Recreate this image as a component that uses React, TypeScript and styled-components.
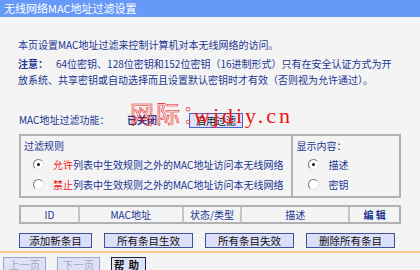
import React from 'react';
import styled, { createGlobalStyle } from 'styled-components';

const GlobalStyle = createGlobalStyle`
  html, body {
    margin: 0;
    padding: 0;
    background: #f4f4f4;
  }
  body {
    font-family: "Noto Sans CJK SC", "Liberation Sans", sans-serif;
    font-size: 10px;
    color: #1a3592;
  }
`

const Page = styled.div`
  position: relative;
  width: 420px;
  height: 270px;
  overflow: hidden;
  background: #f4f4f4;
`

const TitleBar = styled.div`
  height: 17px;
  line-height: 17px;
  background: #6699f8;
  color: #ffffff;
  font-size: 11px;
  padding-left: 4px;
  white-space: nowrap;
`

const Content = styled.div`
  padding: 0 19px 0 19px;
`

const Intro = styled.p`
  margin: 20px 0 0 -1px;
  line-height: 16px;
  white-space: nowrap;
`

const Note = styled.p`
  margin: 3px 0 0 -1px;
  line-height: 16px;
  white-space: nowrap;
`

const Strong = styled.b`
  font-weight: bold;
  margin-right: 8px;
`

const FilterRow = styled.div`
  display: flex;
  align-items: center;
  height: 16px;
  margin-top: 23px;
`

const FilterLabel = styled.span`
  width: 108px;
  white-space: nowrap;
`

const FilterState = styled.b`
  width: 62px;
  font-weight: bold;
`

const SmallButton = styled.button`
  height: 15px;
  padding: 0 6px;
  margin: 2px 0 0 0;
  background: #dfe2f7;
  border: 1px solid #4b63cc;
  color: #111;
  font-family: inherit;
  font-size: 10px;
  line-height: 13px;
`

const Box = styled.div`
  display: flex;
  margin-top: 7px;
  height: 60px;
  border: 2px solid #b2b2b2;
`

const BoxSection = styled.div<{ $width: number; $divider?: boolean }>`
  width: ${(p) => p.$width}px;
  padding: 2px 0 0 3px;
  ${(p) => p.$divider && 'border-left: 2px solid #b2b2b2;'}
`

const SectionTitle = styled.div`
  line-height: 16px;
`

const RadioRow = styled.div<{ $indent: number }>`
  display: flex;
  align-items: center;
  height: 20px;
  padding-left: ${(p) => p.$indent}px;
  white-space: nowrap;
`

const RadioDot = styled.span<{ $checked?: boolean }>`
  position: relative;
  width: 9px;
  height: 9px;
  border-radius: 50%;
  background: #fff;
  border: 1px solid;
  border-color: #7a7a7a #e6e6e6 #e6e6e6 #7a7a7a;
  margin-right: 9px;
  flex: none;
  &::after {
    content: '';
    display: ${(p) => (p.$checked ? 'block' : 'none')};
    position: absolute;
    left: 3px;
    top: 3px;
    width: 3px;
    height: 3px;
    border-radius: 50%;
    background: #111;
  }
`

const Red = styled.span`
  color: #ee1111;
`

const Table = styled.div`
  display: flex;
  margin-top: 7px;
  height: 15px;
  border: 2px solid #b2b2b2;
`

const HeadCell = styled.div<{ $width: number; $bold?: boolean }>`
  width: ${(p) => p.$width}px;
  text-align: center;
  line-height: 15px;
  font-weight: ${(p) => (p.$bold ? 'bold' : 'normal')};
  border-left: 2px solid #c6c6c6;
  &:first-child {
    border-left: none;
  }
`

const ActionRow = styled.div`
  display: flex;
  gap: 12px;
  margin-top: 9px;
`

const ActionButton = styled.button<{ $width: number }>`
  width: ${(p) => p.$width}px;
  height: 15px;
  padding: 0;
  background: #dcdff8;
  border: 1px solid #3f4f9e;
  color: #111;
  font-family: inherit;
  font-size: 10.5px;
  line-height: 13px;
`

const Divider = styled.div`
  height: 2px;
  margin-top: 3px;
  background: #fbcb8e;
`

const NavRow = styled.div`
  display: flex;
  gap: 11px;
  padding: 4px 0 0 3px;
`

const NavButton = styled.button<{ $disabled?: boolean; $width: number }>`
  width: ${(p) => p.$width}px;
  height: 15px;
  padding: 0;
  background: #dfe2f6;
  border: 1px solid ${(p) => (p.$disabled ? '#9aa3d6' : '#1f2540')};
  color: ${(p) => (p.$disabled ? '#a3a8c0' : '#111')};
  font-family: inherit;
  font-size: 10.5px;
  font-weight: ${(p) => (p.$disabled ? 'normal' : 'bold')};
  letter-spacing: ${(p) => (p.$disabled ? '0' : '4px')};
  line-height: 13px;
`

const Watermark = styled.div`
  position: absolute;
  left: 130px;
  top: 95px;
  display: flex;
  align-items: baseline;
  color: #ee1111;
  white-space: nowrap;
  pointer-events: none;
`

const WatermarkHan = styled.span`
  font-family: "Noto Sans CJK SC", sans-serif;
  font-size: 24px;
  letter-spacing: 2px;
  color: transparent;
  -webkit-text-stroke: 0.6px #ee1111;
`

const WatermarkLatin = styled.span`
  font-family: "Liberation Serif", serif;
  font-size: 22px;
  letter-spacing: 3px;
  margin-left: -14px;
`

export default function App() {
  return (
    <Page>
      <GlobalStyle />
      <TitleBar>无线网络MAC地址过滤设置</TitleBar>
      <Content>
        <Intro>本页设置MAC地址过滤来控制计算机对本无线网络的访问。</Intro>
        <Note>
          <Strong>注意：</Strong>64位密钥、128位密钥和152位密钥（16进制形式）只有在安全认证方式为开
          <br />
          放系统、共享密钥或自动选择而且设置默认密钥时才有效（否则视为允许通过）。
        </Note>
        <FilterRow>
          <FilterLabel>MAC地址过滤功能：</FilterLabel>
          <FilterState>已关闭</FilterState>
          <SmallButton>启用过滤</SmallButton>
        </FilterRow>
        <Box>
          <BoxSection $width={271}>
            <SectionTitle>过滤规则</SectionTitle>
            <RadioRow $indent={9}>
              <RadioDot $checked />
              <span><Red>允许</Red>列表中生效规则之外的MAC地址访问本无线网络</span>
            </RadioRow>
            <RadioRow $indent={9}>
              <RadioDot />
              <span><Red>禁止</Red>列表中生效规则之外的MAC地址访问本无线网络</span>
            </RadioRow>
          </BoxSection>
          <BoxSection $width={104} $divider>
            <SectionTitle>显示内容：</SectionTitle>
            <RadioRow $indent={12}>
              <RadioDot $checked />
              <span>描述</span>
            </RadioRow>
            <RadioRow $indent={12}>
              <RadioDot />
              <span>密钥</span>
            </RadioRow>
          </BoxSection>
        </Box>
        <Table>
          <HeadCell $width={58}>ID</HeadCell>
          <HeadCell $width={104}>MAC地址</HeadCell>
          <HeadCell $width={58}>状态/类型</HeadCell>
          <HeadCell $width={108}>描述</HeadCell>
          <HeadCell $width={50} $bold>编 辑</HeadCell>
        </Table>
        <ActionRow>
          <ActionButton $width={73}>添加新条目</ActionButton>
          <ActionButton $width={89}>所有条目生效</ActionButton>
          <ActionButton $width={89}>所有条目失效</ActionButton>
          <ActionButton $width={89}>删除所有条目</ActionButton>
        </ActionRow>
      </Content>
      <Divider />
      <NavRow>
        <NavButton $width={43} $disabled>上一页</NavButton>
        <NavButton $width={43} $disabled>下一页</NavButton>
        <NavButton $width={35}>帮助</NavButton>
      </NavRow>
      <Watermark>
        <WatermarkHan>网际：</WatermarkHan>
        <WatermarkLatin>wjdiy.cn</WatermarkLatin>
      </Watermark>
    </Page>
  );
}
